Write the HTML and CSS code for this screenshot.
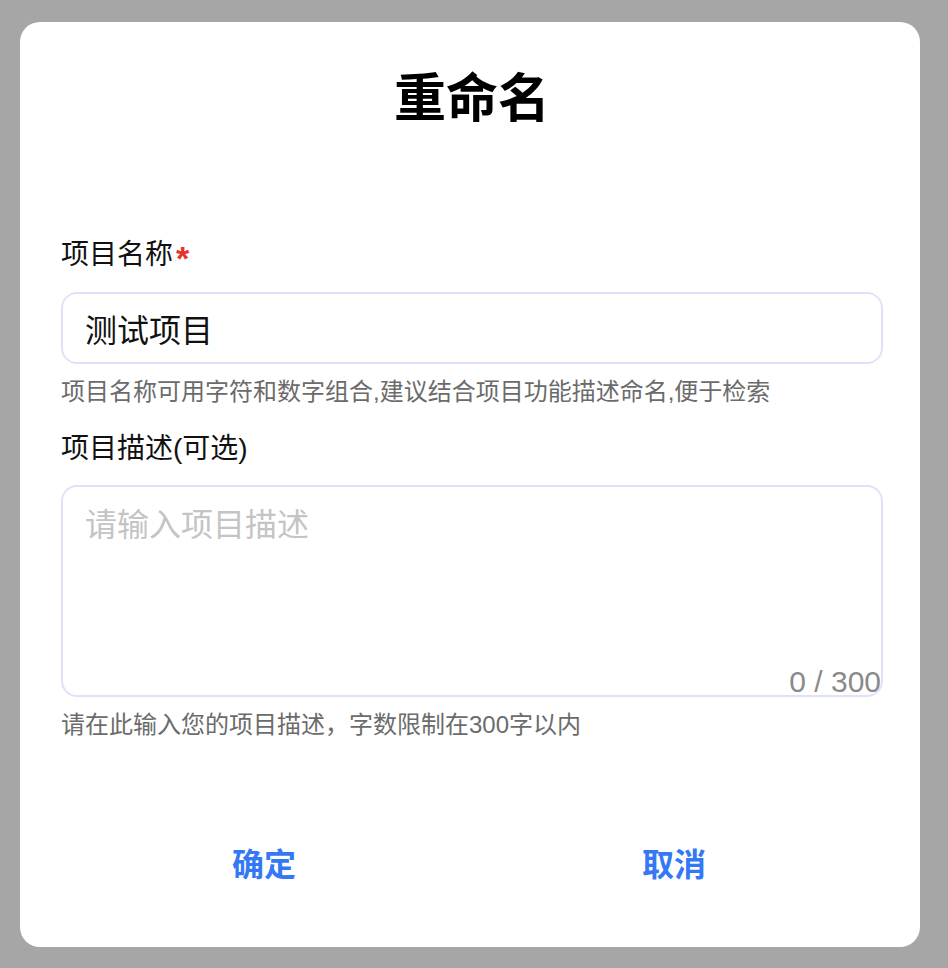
FILE: index.html
```html
<!DOCTYPE html>
<html lang="zh-CN">
<head>
    <meta charset="UTF-8">
    <meta name="viewport" content="width=device-width, initial-scale=1.0">
    <title>重命名</title>
    <link rel="stylesheet" href="styles.css">
</head>
<body>
    <div class="rename-dialog">
        <h2 class="dialog-title">重命名</h2>

        <div class="form-field">
            <label class="field-label" for="projectName">项目名称<span class="required">*</span></label>
            <input class="name-input" id="projectName" type="text" value="测试项目">
            <div class="field-hint">项目名称可用字符和数字组合,建议结合项目功能描述命名,便于检索</div>
        </div>

        <div class="form-field">
            <label class="field-label" for="projectDesc">项目描述(可选)</label>
            <div class="desc-wrap">
                <textarea class="desc-input" id="projectDesc" maxlength="300" placeholder="请输入项目描述"></textarea>
                <span class="char-count"><span id="descCount">0</span> / 300</span>
            </div>
            <div class="field-hint">请在此输入您的项目描述，字数限制在300字以内</div>
        </div>

        <div class="dialog-actions">
            <button class="action-btn">确定</button>
            <button class="action-btn">取消</button>
        </div>
    </div>

    <script>
        const desc = document.getElementById('projectDesc');
        const descCount = document.getElementById('descCount');

        desc.addEventListener('input', function() {
            descCount.textContent = desc.value.length;
        });
    </script>
</body>
</html>
```

FILE: styles.css
```css
* {
    box-sizing: border-box;
}

body {
    margin: 0;
    padding: 22px 0 21px 20px;
    background-color: #a6a6a6;
    font-family: "Liberation Sans", "Noto Sans CJK SC", sans-serif;
    color: #111;
}

.rename-dialog {
    width: 900px;
    height: 925px;
    background-color: #fff;
    border-radius: 20px;
    padding: 47px 37px 0 41px;
}

.dialog-title {
    margin: 0 0 108px 0;
    font-size: 52px;
    line-height: 60px;
    font-weight: 700;
    text-align: center;
    color: #000;
}

.form-field {
    display: flex;
    flex-direction: column;
}

.field-label {
    font-size: 28px;
    line-height: 36px;
    color: #111;
    margin-bottom: 19px;
}

.required {
    color: #e5332a;
    margin-left: 3px;
    font-size: 34px;
    font-weight: 700;
    line-height: 0;
    vertical-align: -6px;
}

.name-input {
    width: 100%;
    height: 72px;
    border: 2px solid #dfe2f8;
    border-radius: 16px;
    padding: 0 22px;
    font-family: inherit;
    font-size: 32px;
    color: #111;
    outline: none;
}

.field-hint {
    font-size: 24px;
    line-height: 32px;
    color: #6b6b6b;
    margin: 12px 0 23px 0;
}

.desc-wrap {
    position: relative;
    height: 212px;
    margin-top: -1px;
}

.desc-input {
    width: 100%;
    height: 100%;
    border: 2px solid #dfe2f8;
    border-radius: 16px;
    padding: 14px 22px;
    font-family: inherit;
    font-size: 32px;
    line-height: 48px;
    color: #111;
    resize: none;
    outline: none;
}

.desc-input::placeholder {
    color: #c4c4c4;
}

.char-count {
    position: absolute;
    right: 2px;
    bottom: 0;
    font-size: 30px;
    line-height: 30px;
    color: #8a8a8a;
}

.dialog-actions {
    display: flex;
    margin: 74px 4px 0 -2px;
}

.action-btn {
    flex: 1;
    height: 48px;
    border: none;
    background: none;
    padding: 0;
    font-family: inherit;
    font-size: 32px;
    font-weight: 700;
    color: #3478f6;
    cursor: pointer;
}
```
